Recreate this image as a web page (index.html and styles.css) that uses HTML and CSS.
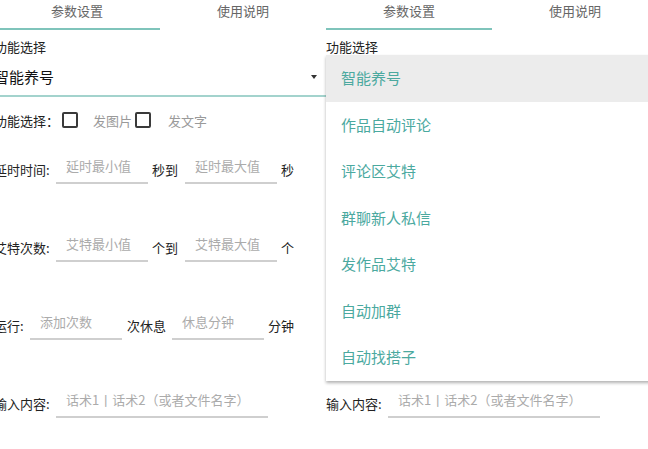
FILE: index.html
```html
<!DOCTYPE html>
<html lang="zh">
<head>
<meta charset="utf-8">
<title>参数设置</title>
<link rel="stylesheet" href="styles.css">
</head>
<body>
<div class="screen screen-left">
  <div class="tabs"><div class="tab active">参数设置</div><div class="tab">使用说明</div></div>
  <div class="section-label">功能选择</div>
  <div class="spinner"><span>智能养号</span><span class="arrow"></span></div>
  <div class="check-row">
    <span class="lbl lbl-check">功能选择：</span>
    <span class="box"></span><span class="opt opt-1">发图片</span>
    <span class="box box-2"></span><span class="opt opt-2">发文字</span>
  </div>
  <div class="fields">
    <div class="frow"><span class="lbl">延时时间:</span><span class="field">延时最小值</span><span class="mid">秒到</span><span class="field">延时最大值</span><span class="end">秒</span></div>
    <div class="frow"><span class="lbl">艾特次数:</span><span class="field">艾特最小值</span><span class="mid">个到</span><span class="field">艾特最大值</span><span class="end">个</span></div>
    <div class="frow"><span class="lbl lbl-short">运行:</span><span class="field">添加次数</span><span class="mid mid-wide">次休息</span><span class="field">休息分钟</span><span class="end">分钟</span></div>
    <div class="frow"><span class="lbl">输入内容:</span><span class="field field-wide">话术1丨话术2（或者文件名字）</span></div>
  </div>
</div>
<div class="screen">
  <div class="tabs"><div class="tab active">参数设置</div><div class="tab">使用说明</div></div>
  <div class="section-label">功能选择</div>
  <div class="spinner covered"><span>智能养号</span><span class="arrow"></span></div>
  <div class="check-row covered">
    <span class="lbl lbl-check">功能选择：</span>
    <span class="box"></span><span class="opt opt-1">发图片</span>
    <span class="box box-2"></span><span class="opt opt-2">发文字</span>
  </div>
  <div class="fields">
    <div class="frow covered"><span class="lbl">延时时间:</span><span class="field">延时最小值</span><span class="mid">秒到</span><span class="field">延时最大值</span><span class="end">秒</span></div>
    <div class="frow covered"><span class="lbl">艾特次数:</span><span class="field">艾特最小值</span><span class="mid">个到</span><span class="field">艾特最大值</span><span class="end">个</span></div>
    <div class="frow covered"><span class="lbl lbl-short">运行:</span><span class="field">添加次数</span><span class="mid mid-wide">次休息</span><span class="field">休息分钟</span><span class="end">分钟</span></div>
    <div class="frow"><span class="lbl">输入内容:</span><span class="field field-wide">话术1丨话术2（或者文件名字）</span></div>
  </div>
  <div class="menu">
    <div class="menu-item sel">智能养号</div>
    <div class="menu-item">作品自动评论</div>
    <div class="menu-item">评论区艾特</div>
    <div class="menu-item">群聊新人私信</div>
    <div class="menu-item">发作品艾特</div>
    <div class="menu-item">自动加群</div>
    <div class="menu-item">自动找搭子</div>
  </div>
</div>
</body>
</html>
```
FILE: styles.css
```css
html, body {
  margin: 0;
  padding: 0;
}
body {
  width: 648px;
  height: 449px;
  overflow: hidden;
  background: #fff;
  font-family: "Noto Sans CJK SC", "Noto Sans", sans-serif;
  color: #222;
  display: flex;
}
.screen {
  position: relative;
  flex: 0 0 332px;
  width: 332px;
  height: 449px;
}
.screen-left {
  margin-left: -6px;
}
.covered {
  visibility: hidden;
}
.tabs {
  display: flex;
}
.tab {
  flex: 1;
  height: 30px;
  box-sizing: border-box;
  line-height: 22px;
  text-align: center;
  font-size: 13px;
  color: #666;
  border-bottom: 2px solid transparent;
}
.tab.active {
  border-bottom-color: #7fc4bb;
}
.section-label {
  font-size: 13px;
  line-height: 18px;
  margin-top: 8px;
}
.spinner {
  display: flex;
  align-items: center;
  justify-content: space-between;
  height: 41px;
  box-sizing: border-box;
  padding: 1px 9px 0 0;
  border-bottom: 2px solid #a3d3cd;
  font-size: 15px;
  color: #111;
}
.arrow {
  width: 0;
  height: 0;
  border-left: 3.5px solid transparent;
  border-right: 3.5px solid transparent;
  border-top: 4px solid #333;
  margin-top: 2px;
}
.check-row {
  display: flex;
  align-items: center;
  height: 32px;
  margin-top: 7px;
  font-size: 13px;
}
.lbl {
  flex: 0 0 auto;
  width: 62px;
  white-space: nowrap;
}
.lbl-check {
  width: 68px;
}
.lbl-short {
  width: 36px;
}
.box {
  width: 16px;
  height: 16px;
  box-sizing: border-box;
  border: 2px solid #3a3a3a;
  border-radius: 2px;
}
.box-2 {
  margin-left: 3px;
}
.opt {
  color: #9a9a9a;
}
.opt-1 {
  margin-left: 15px;
}
.opt-2 {
  margin-left: 17px;
}
.fields {
  display: flex;
  flex-direction: column;
  gap: 39px;
  margin-top: 14px;
}
.frow {
  display: flex;
  align-items: center;
  font-size: 13px;
  white-space: nowrap;
}
.field {
  flex: 0 0 auto;
  width: 92px;
  height: 34px;
  box-sizing: border-box;
  padding: 2px 0 2px 10px;
  line-height: 28px;
  border-bottom: 2px solid #cfcfcf;
  margin-bottom: 5px;
  color: #ababab;
  overflow: hidden;
}
.field-wide {
  width: 212px;
}
.mid {
  flex: 0 0 auto;
  width: 37px;
  box-sizing: border-box;
  padding-left: 4px;
}
.mid-wide {
  width: 50px;
  padding-left: 5px;
}
.end {
  padding-left: 4px;
}
.menu {
  position: absolute;
  top: 55px;
  left: 0;
  right: 0;
  background: #fff;
  box-shadow: 0 2px 3px rgba(0, 0, 0, 0.3);
}
.menu-item {
  height: 46.5px;
  line-height: 46.5px;
  padding-left: 15px;
  font-size: 15px;
  color: #4ba99f;
}
.menu-item.sel {
  background: #ececec;
}
```
